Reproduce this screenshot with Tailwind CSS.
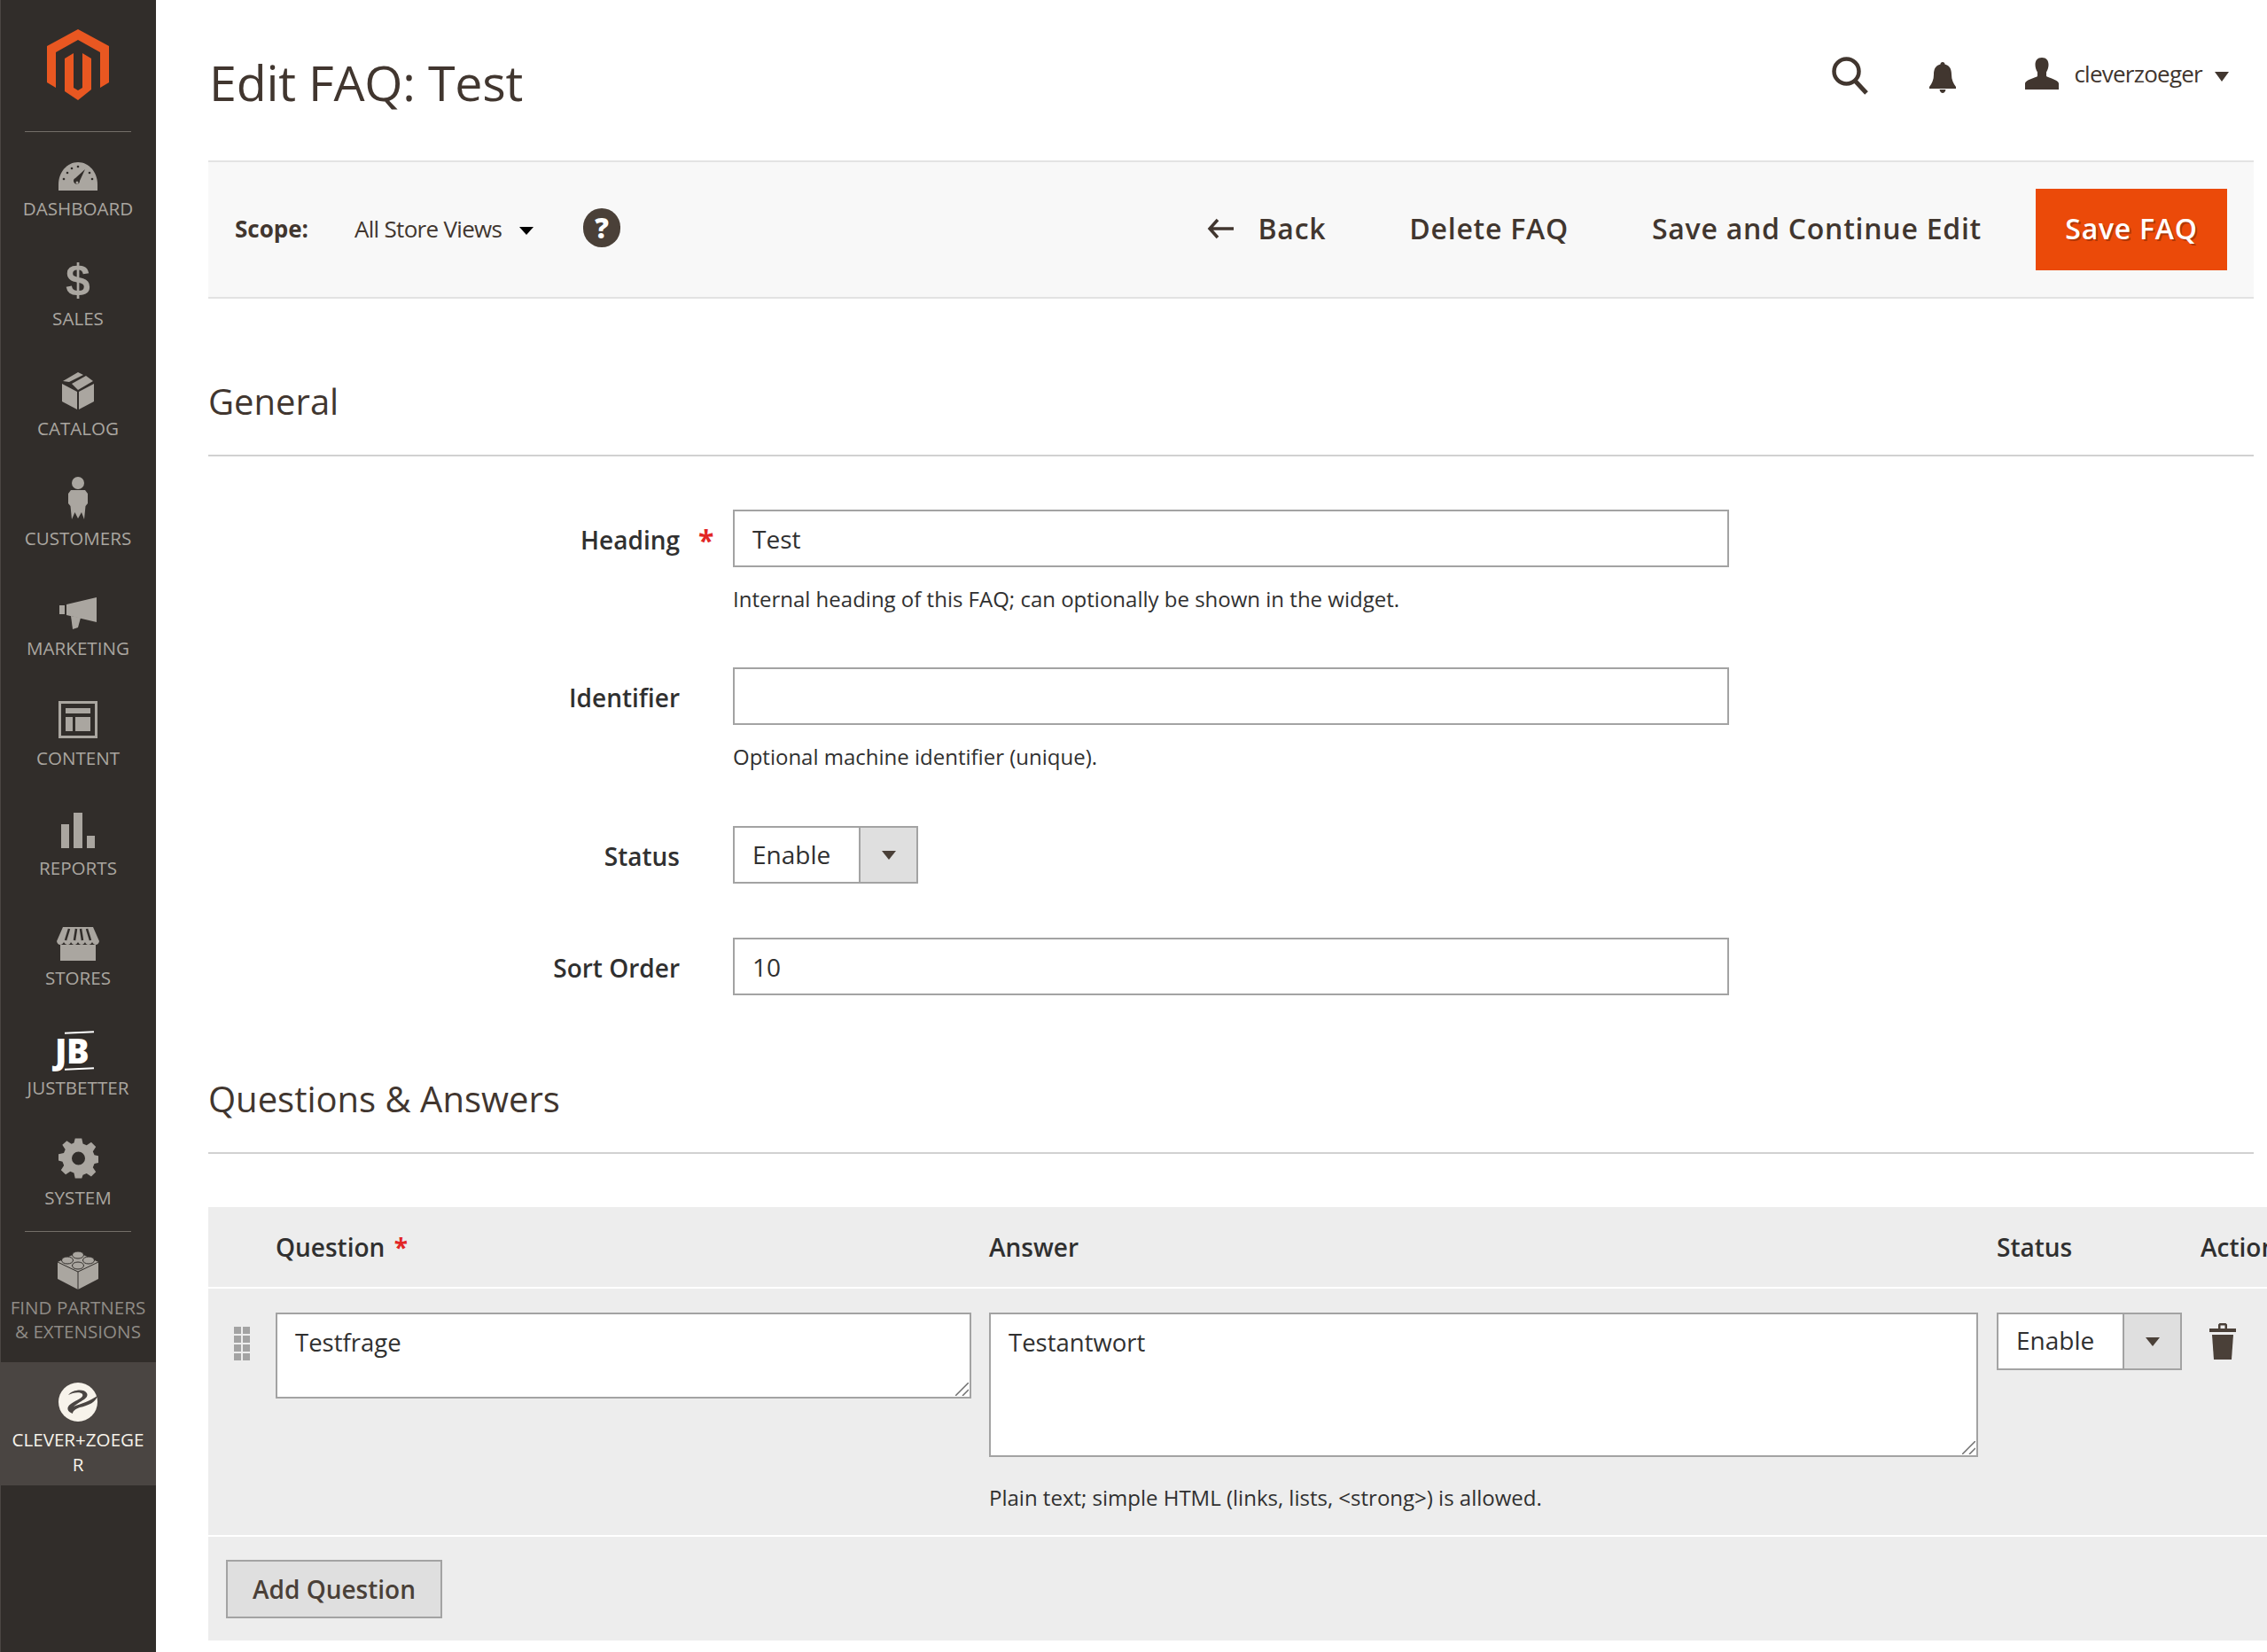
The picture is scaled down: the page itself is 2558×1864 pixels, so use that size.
<!DOCTYPE html>
<html lang="en">
<head>
    <meta charset="UTF-8">
    <title>Edit FAQ: Test</title>
    <script src="https://cdn.jsdelivr.net/npm/@tailwindcss/browser@4"></script>
</head>
<body class="font-['Open_Sans',sans-serif] bg-white text-[#303030] overflow-hidden">
<div class="flex h-[1864px] w-[2558px] overflow-hidden">

    <!-- Sidebar -->
    <nav class="w-[176px] shrink-0 bg-[#312d2a] border-l border-[#4a4542] pr-[1px] text-[#aaa6a0] text-[20.6px] leading-[27px] text-center flex flex-col items-center">
        <svg class="mt-[33px] shrink-0" width="70" height="80" viewBox="0 0 70 80" fill="#e95721">
            <polygon points="35,0 70,19 70,60 60,66 60,26 35,12 10,26 10,66 0,60 0,19"/>
            <polygon points="20,33 30,27 30,66 35,69 40,66 40,27 50,33 50,68 35,80 20,70"/>
        </svg>
        <div class="mt-[35px] w-[120px] h-px bg-[#736e68] shrink-0"></div>

        <div class="w-full h-[124px] mt-[10px] flex flex-col items-center shrink-0">
            <div class="h-[57px] flex items-end pb-[1px]">
                <svg width="44" height="32" viewBox="0 0 44 32">
                    <path d="M0 32V25C0 11 10 0 22 0s22 11 22 25v7z" fill="#aaa6a0"/>
                    <path d="M30 8 24 21a3.500 3.500 0 1 1-5-3z" fill="#312d2a"/>
                    <circle cx="21" cy="23" r="1.500" fill="#aaa6a0"/>
                    <g fill="#312d2a"><circle cx="6" cy="19" r="1.300"/><circle cx="10" cy="12" r="1.300"/><circle cx="15" cy="7" r="1.300"/><circle cx="22" cy="5" r="1.300"/><circle cx="38" cy="19" r="1.300"/><circle cx="35" cy="12" r="1.300"/></g>
                </svg>
            </div>
            <span class="mt-[6px]">DASHBOARD</span>
        </div>
        <div class="w-full h-[124px] flex flex-col items-center shrink-0">
            <div class="h-[60px] flex items-end justify-center text-[50px] leading-[54px] font-bold font-['Liberation_Sans',sans-serif]">$</div>
            <span class="mt-[3px]">SALES</span>
        </div>
        <div class="w-full h-[124px] flex flex-col items-center shrink-0">
            <div class="h-[56px] flex items-end pb-[1px]">
                <svg width="36" height="42" viewBox="0 0 36 42" fill="#aaa6a0">
                    <path d="M0 13 17 22V42L0 33z"/><path d="M36 13 19 22V42L36 33z"/>
                    <path d="M18 0 24 3 8 11 1 10z"/><path d="M27 4 35 10 18 20 11 13z"/>
                </svg>
            </div>
            <span class="mt-[7px]">CATALOG</span>
        </div>
        <div class="w-full h-[124px] flex flex-col items-center shrink-0">
            <div class="h-[56px] flex items-end pb-[1px]">
                <svg width="22" height="48" viewBox="0 0 22 48" fill="#aaa6a0">
                    <ellipse cx="11" cy="7" rx="7" ry="7"/>
                    <path d="M3 15H19L22 19V30L19.500 33 18 48 15 40 11 47 7.500 40 4 48 2.500 33 0 30V19z"/>
                </svg>
            </div>
            <span class="mt-[7px]">CUSTOMERS</span>
        </div>
        <div class="w-full h-[124px] flex flex-col items-center shrink-0">
            <div class="h-[56px] flex items-end pb-[1px]">
                <svg width="42" height="36" viewBox="0 0 42 36" fill="#aaa6a0">
                    <path d="M0 9H6V19H0z"/><path d="M8 8 42 0V28L8 20z"/><path d="M13 21 24 23 21 34 15 36z"/>
                </svg>
            </div>
            <span class="mt-[7px]">MARKETING</span>
        </div>
        <div class="w-full h-[124px] flex flex-col items-center shrink-0">
            <div class="h-[55px] flex items-end pb-[1px]">
                <svg width="44" height="42" viewBox="0 0 44 42" fill="#aaa6a0">
                    <path fill-rule="evenodd" d="M0 0H44V42H0zM3 3V39H41V3z"/>
                    <path d="M8 8H36V14H8z"/><path d="M8 18H16V34H8z"/><path d="M19 18H36V34H19z"/>
                </svg>
            </div>
            <span class="mt-[8px]">CONTENT</span>
        </div>
        <div class="w-full h-[124px] flex flex-col items-center shrink-0">
            <div class="h-[55px] flex items-end pb-[1px]">
                <svg width="38" height="40" viewBox="0 0 38 40" fill="#aaa6a0">
                    <path d="M0 13H9V40H0z"/><path d="M14 0H24V40H14z"/><path d="M29 26H38V40H29z"/>
                </svg>
            </div>
            <span class="mt-[8px]">REPORTS</span>
        </div>
        <div class="w-full h-[124px] flex flex-col items-center shrink-0">
            <div class="h-[58px] flex items-end pb-[1px]">
                <svg width="48" height="38" viewBox="0 0 48 38" fill="#aaa6a0">
                    <path d="M7 0H41L48 16C47 21 42 21 40 17 38 21 33 21 32 17 30 21 26 21 24 17 22 21 18 21 16 17 15 21 10 21 8 17 6 21 1 21 0 16z"/>
                    <path d="M4 20H44V38H4z"/>
                    <g stroke="#312d2a" stroke-width="2.500"><path d="M14 2 10 15"/><path d="M22 2 20 15"/><path d="M27 2 29 15"/><path d="M34 2 38 15"/></g>
                </svg>
            </div>
            <span class="mt-[5px]">STORES</span>
        </div>
        <div class="w-full h-[124px] flex flex-col items-center shrink-0">
            <div class="h-[58px] flex items-end pb-[1px] text-white">
                <div class="w-[44px] h-[44px] relative ml-[-8px]">
                    <span class="absolute left-0 top-[-3px] text-[38px] leading-[48px] font-extrabold tracking-[-0.5px]">JB</span>
                    <div class="absolute right-0 top-0 w-[33px] h-[2px] bg-white -rotate-3"></div>
                    <div class="absolute right-0 bottom-[1px] w-[33px] h-[2px] bg-white -rotate-3"></div>
                </div>
            </div>
            <span class="mt-[5px]">JUSTBETTER</span>
        </div>
        <div class="w-full h-[115px] flex flex-col items-center shrink-0">
            <div class="h-[56px] flex items-end pb-[1px]">
                <svg width="45" height="46" viewBox="0 0 24 24" fill="#aaa6a0">
                    <path fill-rule="evenodd" d="M10 0h4l.7 3.200 2.200.9L19.700 2.300 22.500 5l-1.800 2.800.9 2.200 3.200.7v3.800l-3.200.7-.9 2.200 1.800 2.800-2.800 2.700-2.800-1.800-2.200.9L14 24h-4l-.7-3.200-2.200-.9-2.800 1.800L1.500 19l1.800-2.800-.9-2.200L0 13.300V9.500l3.200-.7.900-2.200L2.300 3.800 5 1.500l2.800 1.800 1.500-.7zM12 8a4 4 0 1 0 0 8 4 4 0 0 0 0-8z"/>
                </svg>
            </div>
            <span class="mt-[7px]">SYSTEM</span>
        </div>
        <div class="w-[120px] h-px bg-[#736e68] shrink-0 mt-[-1px]"></div>
        <div class="w-full h-[147px] flex flex-col items-center shrink-0 pt-[21px] text-[#8f8b86]">
            <svg class="shrink-0" width="46" height="44" viewBox="0 0 46 44">
                <path d="M0 13 23 2 46 13V32L23 44 0 32z" fill="#aaa6a0"/>
                <path d="M0 13 23 24 46 13M23 24V44" fill="none" stroke="#312d2a" stroke-width="1"/>
                <g fill="#aaa6a0" stroke="#312d2a" stroke-width="1"><ellipse cx="23" cy="5" rx="6.500" ry="4"/><ellipse cx="11" cy="11" rx="6.500" ry="4"/><ellipse cx="35" cy="11" rx="6.500" ry="4"/><ellipse cx="23" cy="17" rx="6.500" ry="4"/></g>
            </svg>
            <span class="mt-[7px] whitespace-nowrap">FIND PARTNERS<br>&amp; EXTENSIONS</span>
        </div>
        <div class="w-[175px] -mr-[1px] h-[139px] bg-[#4a4542] flex flex-col items-center shrink-0 pt-[23px] pr-[1px] text-[#f7f3eb] leading-[28px]">
            <svg class="shrink-0" width="44" height="44" viewBox="0 0 44 44">
                <circle cx="22" cy="22" r="22" fill="#f7f3eb"/>
                <path d="M11 14C15 8 29 6 32 12 35 18 24 21 17 27 25 24 35 21 44 15 42 22 34 26 24 28 19 30 16 32 16 35 10 33 8 28 14 24 21 19 29 17 27 13 25 10 16 11 11 14z" fill="#4a4542"/>
            </svg>
            <span class="mt-[6px] w-full break-all px-[8px]">CLEVER+ZOEGER</span>
        </div>
    </nav>

    <!-- Main -->
    <main class="flex-1 min-w-0 pl-[59px]">
        <!-- Page header -->
        <header class="h-[181px] flex justify-between pr-[43px]">
            <h1 class="mt-[58px] text-[55.5px] leading-[70px] text-[#41362f] ml-[1px] tracking-[-0.2px]">Edit FAQ: Test</h1>
            <div class="flex items-start text-[#41362f]">
                <svg class="mt-[64px]" width="42" height="43" viewBox="0 0 42 43" fill="none" stroke="#41362f">
                    <circle cx="16.500" cy="16.500" r="14" stroke-width="4.500"/>
                    <path d="M26 27 39 41" stroke-width="5"/>
                </svg>
                <svg class="mt-[70px] ml-[68px]" width="30" height="35" viewBox="0 0 30 35" fill="#41362f">
                    <path d="M15 0c1.500 0 2.500 1 2.500 2.500C23 4 25 8 25 14c0 6 2 10 5 14v2H0v-2c3-4 5-8 5-14 0-6 2-10 7.500-11.500C12.500 1 13.500 0 15 0z"/>
                    <path d="M11.500 31h7c-.500 2.500-2 4-3.500 4s-3-1.500-3.500-4z"/>
                </svg>
                <svg class="mt-[65px] ml-[78px]" width="38" height="36" viewBox="0 0 38 36" fill="#41362f">
                    <path d="M19 0c5 0 7.500 3 7.500 8 0 3-1 6-2.500 8.500V21c3 2 13 4 14 8v7H0v-7c1-4 11-6 14-8v-4.500C12.500 14 11.500 11 11.500 8 11.500 3 14 0 19 0z"/>
                </svg>
                <span class="mt-[65px] ml-[17px] text-[26px] leading-[36px] tracking-[-0.75px]">cleverzoeger</span>
                <span class="mt-[81px] ml-[14px] w-0 h-0 border-x-[8px] border-x-transparent border-t-[11px] border-t-[#41362f]"></span>
            </div>
        </header>

        <!-- Toolbar -->
        <div class="mr-[15px] h-[156px] bg-[#f8f8f8] border-y-2 border-[#e3e3e3] flex items-center pl-[30px] pr-[30px]">
            <span class="mt-[-2px] text-[26px] font-bold text-[#41362f]">Scope:</span>
            <span class="mt-[-2px] ml-[52px] text-[26px] text-[#41362f] tracking-[-0.7px]">All Store Views</span>
            <span class="ml-[20px] mt-[2px] w-0 h-0 border-x-[8px] border-x-transparent border-t-[9px] border-t-black"></span>
            <span class="ml-[56px] mt-[-4px] w-[42px] h-[44px] rounded-full bg-[#4a4038] text-white text-[31px] leading-[44px] font-extrabold text-center">?</span>
            <div class="ml-auto flex items-center text-[32px] font-semibold text-[#41362f] tracking-[0.75px]">
                <svg class="mt-[-3px]" width="30" height="24" viewBox="0 0 30 24" fill="none" stroke="#41362f" stroke-width="3.500"><path d="M12 2 3 12 12 22M3 12H30"/></svg>
                <span class="ml-[27px] mt-[-2px]">Back</span>
                <span class="ml-[94px] mt-[-2px]">Delete FAQ</span>
                <span class="ml-[94px] mt-[-2px]">Save and Continue Edit</span>
                <button class="ml-[61px] w-[216px] h-[92px] pb-[2px] bg-[#eb4a09] text-white font-semibold [text-shadow:2px_2px_0_rgba(0,0,0,0.25)]">Save FAQ</button>
            </div>
        </div>

        <!-- General -->
        <h2 class="mt-[91px] text-[40px] leading-[50px] text-[#41362f]">General</h2>
        <div class="mt-[35px] mr-[15px] h-[2px] bg-[#d1d1d1]"></div>
        <div class="mt-[60px] text-[#303030]">
            <div class="flex h-[178px]">
                <label class="w-[532px] text-right text-[28px] font-semibold leading-[44px] pt-[12px]">Heading</label>
                <span class="w-[60px] pl-[21px] text-[#e22626] text-[32px] font-bold leading-[44px] pt-[13px]">*</span>
                <div>
                    <input value="Test" class="block w-[1124px] h-[65px] border-2 border-[#a3a3a3] bg-white px-[20px] text-[28px] outline-none">
                    <p class="mt-[19px] text-[24px] leading-[34px]">Internal heading of this FAQ; can optionally be shown in the widget.</p>
                </div>
            </div>
            <div class="flex h-[179px]">
                <label class="w-[532px] text-right text-[28px] font-semibold leading-[44px] pt-[12px]">Identifier</label>
                <span class="w-[60px]"></span>
                <div>
                    <input class="block w-[1124px] h-[65px] border-2 border-[#a3a3a3] bg-white px-[20px] text-[28px] outline-none">
                    <p class="mt-[19px] text-[24px] leading-[34px]">Optional machine identifier (unique).</p>
                </div>
            </div>
            <div class="flex h-[126px]">
                <label class="w-[532px] text-right text-[28px] font-semibold leading-[44px] pt-[12px]">Status</label>
                <span class="w-[60px]"></span>
                <div class="flex w-[209px] h-[65px] border-2 border-[#a3a3a3] bg-white text-[28px]">
                    <span class="w-[140px] pl-[20px] leading-[60px]">Enable</span>
                    <span class="flex-1 border-l-2 border-[#a3a3a3] bg-[#dfdfdf] flex items-center justify-center"><span class="w-0 h-0 border-x-[8px] border-x-transparent border-t-[10px] border-t-[#4a4038]"></span></span>
                </div>
            </div>
            <div class="flex h-[65px]">
                <label class="w-[532px] text-right text-[28px] font-semibold leading-[44px] pt-[12px]">Sort Order</label>
                <span class="w-[60px]"></span>
                <input value="10" class="block w-[1124px] h-[65px] border-2 border-[#a3a3a3] bg-white px-[20px] text-[28px] outline-none">
            </div>
        </div>

        <!-- Questions & Answers -->
        <h2 class="mt-[92px] text-[40px] leading-[50px] text-[#41362f]">Questions &amp; Answers</h2>
        <div class="mt-[35px] mr-[15px] h-[2px] bg-[#d1d1d1]"></div>
        <div class="mt-[60px] w-[2323px] bg-[#ededed] text-[#303030]">
            <div class="h-[90px] flex pl-[76px] items-center text-[28px] font-semibold leading-[40px] whitespace-nowrap border-b-2 border-white box-content">
                <div class="w-[805px] shrink-0">Question <span class="text-[#e22626] font-bold ml-[3px]">*</span></div>
                <div class="w-[1137px] shrink-0">Answer</div>
                <div class="w-[230px] shrink-0">Status</div>
                <div class="shrink-0">Actions</div>
            </div>
            <div class="flex pt-[27px] h-[251px] border-b-2 border-white box-content">
                <div class="w-[76px] shrink-0 pl-[29px] pt-[16px]">
                    <div class="grid grid-cols-2 gap-[2px] w-[18px]">
                        <i class="h-[8px] bg-[#a3a3a3]"></i><i class="h-[8px] bg-[#a3a3a3]"></i>
                        <i class="h-[8px] bg-[#a3a3a3]"></i><i class="h-[8px] bg-[#a3a3a3]"></i>
                        <i class="h-[8px] bg-[#a3a3a3]"></i><i class="h-[8px] bg-[#a3a3a3]"></i>
                        <i class="h-[8px] bg-[#a3a3a3]"></i><i class="h-[8px] bg-[#a3a3a3]"></i>
                    </div>
                </div>
                <div class="w-[805px] shrink-0">
                    <div class="relative w-[785px] h-[97px]">
                        <textarea class="block resize-none w-full h-full border-2 border-[#a3a3a3] bg-white px-[20px] py-[13px] text-[27.5px] leading-[38px] outline-none">Testfrage</textarea>
                        <svg class="absolute right-[3px] bottom-[3px]" width="15" height="15" viewBox="0 0 15 15" stroke="#6f6f6f" stroke-width="1.500"><path d="M0 15 15 0M8 15 15 8"/></svg>
                    </div>
                </div>
                <div class="w-[1137px] shrink-0">
                    <div class="relative w-[1116px] h-[163px]">
                        <textarea class="block resize-none w-full h-full border-2 border-[#a3a3a3] bg-white px-[20px] py-[13px] text-[27.5px] leading-[38px] outline-none">Testantwort</textarea>
                        <svg class="absolute right-[3px] bottom-[3px]" width="15" height="15" viewBox="0 0 15 15" stroke="#6f6f6f" stroke-width="1.500"><path d="M0 15 15 0M8 15 15 8"/></svg>
                    </div>
                    <p class="mt-[29px] text-[24px] leading-[34px]">Plain text; simple HTML (links, lists, &lt;strong&gt;) is allowed.</p>
                </div>
                <div class="w-[230px] shrink-0">
                    <div class="flex w-[209px] h-[65px] border-2 border-[#a3a3a3] bg-white text-[28px]">
                        <span class="w-[140px] pl-[20px] leading-[58px]">Enable</span>
                        <span class="flex-1 border-l-2 border-[#a3a3a3] bg-[#dfdfdf] flex items-center justify-center"><span class="w-0 h-0 border-x-[8px] border-x-transparent border-t-[10px] border-t-[#4a4038]"></span></span>
                    </div>
                </div>
                <svg class="mt-[12px] ml-[10px]" width="30" height="41" viewBox="0 0 30 41" fill="#4a4038">
                    <path d="M10 6V1.500L11.500 0H18.500L20 1.500V6H30V10H0V6zM12.500 2.500V6H17.500V2.500z" fill-rule="evenodd"/>
                    <path d="M3 13H27L25 41H5z"/>
                </svg>
            </div>
            <div class="h-[117px] pl-[20px] pt-[26px]">
                <button class="w-[244px] h-[66px] border-2 border-[#a3a3a3] bg-[#dfdfdf] text-[28px] font-semibold text-[#4a4038]">Add Question</button>
            </div>
        </div>
    </main>
</div>
</body>
</html>
